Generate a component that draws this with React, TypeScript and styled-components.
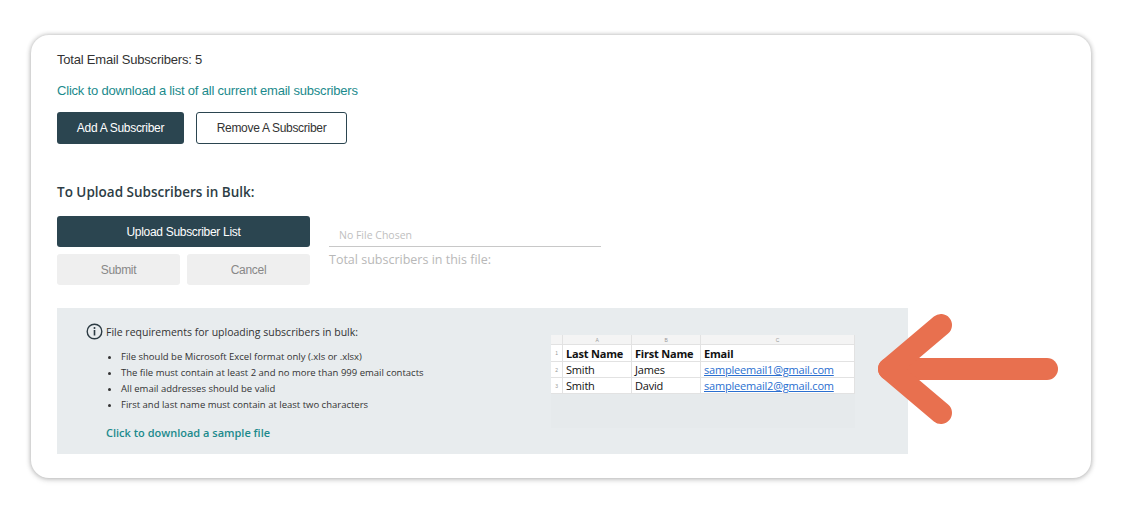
import React from "react";
import styled, { createGlobalStyle } from "styled-components";

const Global = createGlobalStyle`
  html, body { margin: 0; background: #fff; }
  body { width: 1122px; height: 508px; overflow: hidden; }
`;
const Page = styled.div`padding: 35px 31px 0 31px;`;
const Card = styled.div`
  position: relative; width: 1060px; height: 443px; box-sizing: border-box;
  border-radius: 18px; background: #fff;
  box-shadow: 0 0 5px rgba(0,0,0,0.28), 0 2px 6px rgba(0,0,0,0.12);
  padding: 17px 0 0 26px; font-family: "Liberation Sans", Arial, sans-serif;
`;
const Total = styled.div`font-size: 13px; color: #333; letter-spacing: -0.2px; height: 18px;`;
const TopLink = styled.div`margin-top: 13px; font-size: 13px; color: #1b8a8c; letter-spacing: -0.2px;`;
const Row = styled.div<{ $gap: number; $mt: number }>`display: flex; gap: ${p => p.$gap}px; margin-top: ${p => p.$mt}px;`;
const Btn = styled.div<{ $w: number; $h?: number; $variant: "dark" | "outline" | "gray" }>`
  width: ${p => p.$w}px; height: ${p => p.$h ?? 32}px; box-sizing: border-box;
  display: flex; align-items: center; justify-content: center; border-radius: 3px;
  font-size: 12px; letter-spacing: -0.3px;
  background: ${p => p.$variant === "dark" ? "#2b4550" : p.$variant === "gray" ? "#efefef" : "#fff"};
  color: ${p => p.$variant === "dark" ? "#fff" : p.$variant === "gray" ? "#888" : "#333"};
  border: ${p => p.$variant === "outline" ? "1.5px solid #2b4550" : "none"};
`;
const Heading = styled.div`
  margin-top: 39px; font-family: "Open Sans", sans-serif; font-weight: 600; font-size: 13.5px; color: #2d3d45;
`;
const Upload = styled.div`display: flex; gap: 19px; margin-top: 15px;`;
const Col = styled.div`display: flex; flex-direction: column; gap: 7px;`;
const FileCol = styled.div`display: flex; flex-direction: column; padding-top: 12px; font-family: "Open Sans", sans-serif;`;
const FileInput = styled.div`
  width: 272px; border-bottom: 1px solid #c8c8c8; padding: 0 0 4px 10px; box-sizing: border-box;
  font-size: 10.5px; color: #c0c0c0;
`;
const FileTotal = styled.div`margin-top: 4px; font-size: 12.5px; color: #b8b8b8;`;
const Panel = styled.div`
  margin-top: 23px; width: 851px; height: 146px; background: #e8ecee;
  display: flex; padding: 15px 0 0 29px; box-sizing: border-box; font-family: "Open Sans", sans-serif;
`;
const Req = styled.div`width: 465px;`;
const ReqTitle = styled.div`display: flex; align-items: center; gap: 3px; font-size: 10.5px; color: #333;`;
const List = styled.ul`margin: 9px 0 0 0; padding-left: 35px; font-size: 9.5px; color: #333;
  li { line-height: 16px; }`;
const SampleLink = styled.div`margin-top: 12px; margin-left: 20px; font-size: 11px; font-weight: 600; color: #1b8a8c;`;
const Sheet = styled.div`
  margin-top: 12px; width: 304px; height: 93px; display: grid;
  grid-template-columns: 12px 69px 69px 154px; grid-template-rows: 10px 17px 16px 16px 1fr;
  font-family: "Liberation Sans", Arial, sans-serif; font-size: 11px; color: #111; background: #e6eaec;
`;
const Cell = styled.div<{ $kind?: "hdr" | "num" | "bold" | "mail" | "" }>`
  background: ${p => p.$kind === "hdr" ? "#f4f4f4" : "#fff"};
  border-right: 1px solid #e2e2e2; border-bottom: 1px solid #e2e2e2;
  display: flex; align-items: center; padding-left: ${p => p.$kind === "num" || p.$kind === "hdr" ? 0 : 3}px;
  justify-content: ${p => p.$kind === "num" || p.$kind === "hdr" ? "center" : "flex-start"};
  font-size: ${p => p.$kind === "hdr" || p.$kind === "num" ? "5px" : "11px"};
  color: ${p => p.$kind === "mail" ? "#2a6fd0" : p.$kind === "hdr" || p.$kind === "num" ? "#999" : "#111"};
  font-weight: ${p => p.$kind === "bold" ? 700 : 400};
  letter-spacing: -0.2px;
  text-decoration: ${p => p.$kind === "mail" ? "underline" : "none"};
  font-family: ${p => p.$kind === "hdr" || p.$kind === "num" ? "inherit" : '"Open Sans", sans-serif'};
`;
const ArrowSvg = styled.svg`position: absolute; left: 800px; top: 246px;`;

export default function App() {
  const rows = [["Smith", "James", "sampleemail1@gmail.com"], ["Smith", "David", "sampleemail2@gmail.com"]];
  return (
    <Page>
      <Global />
      <Card>
        <Total>Total Email Subscribers: 5</Total>
        <TopLink>Click to download a list of all current email subscribers</TopLink>
        <Row $gap={12} $mt={14}>
          <Btn $w={127} $variant="dark">Add A Subscriber</Btn>
          <Btn $w={151} $variant="outline">Remove A Subscriber</Btn>
        </Row>
        <Heading>To Upload Subscribers in Bulk:</Heading>
        <Upload>
          <Col>
            <Btn $w={253} $h={31} $variant="dark">Upload Subscriber List</Btn>
            <Row $gap={7} $mt={0}>
              <Btn $w={123} $h={31} $variant="gray">Submit</Btn>
              <Btn $w={123} $h={31} $variant="gray">Cancel</Btn>
            </Row>
          </Col>
          <FileCol>
            <FileInput>No File Chosen</FileInput>
            <FileTotal>Total subscribers in this file:</FileTotal>
          </FileCol>
        </Upload>
        <Panel>
          <Req>
            <ReqTitle>
              <svg width="17" height="17" viewBox="0 0 17 17">
                <circle cx="8.5" cy="8.5" r="7.3" fill="none" stroke="#2b3a42" strokeWidth="1.4" />
                <circle cx="8.5" cy="5" r="1" fill="#2b3a42" />
                <rect x="7.7" y="7" width="1.6" height="5.5" fill="#2b3a42" />
              </svg>
              File requirements for uploading subscribers in bulk:
            </ReqTitle>
            <List>
              <li>File should be Microsoft Excel format only (.xls or .xlsx)</li>
              <li>The file must contain at least 2 and no more than 999 email contacts</li>
              <li>All email addresses should be valid</li>
              <li>First and last name must contain at least two characters</li>
            </List>
            <SampleLink>Click to download a sample file</SampleLink>
          </Req>
          <Sheet>
            <Cell $kind="hdr"></Cell><Cell $kind="hdr">A</Cell><Cell $kind="hdr">B</Cell><Cell $kind="hdr">C</Cell>
            <Cell $kind="num">1</Cell><Cell $kind="bold">Last Name</Cell><Cell $kind="bold">First Name</Cell><Cell $kind="bold">Email</Cell>
            {rows.map((r, i) => (
              <React.Fragment key={i}>
                <Cell $kind="num">{i + 2}</Cell><Cell $kind="">{r[0]}</Cell><Cell $kind="">{r[1]}</Cell><Cell $kind="mail">{r[2]}</Cell>
              </React.Fragment>
            ))}
          </Sheet>
        </Panel>
        <ArrowSvg width="230" height="150" viewBox="0 0 230 150">
          <g fill="none" stroke="#e8704f" strokeWidth="22" strokeLinecap="round" strokeLinejoin="round">
            <line x1="58" y1="88" x2="216" y2="88" />
            <polyline points="110,44 58,88 110,132" />
          </g>
        </ArrowSvg>
      </Card>
    </Page>
  );
}
